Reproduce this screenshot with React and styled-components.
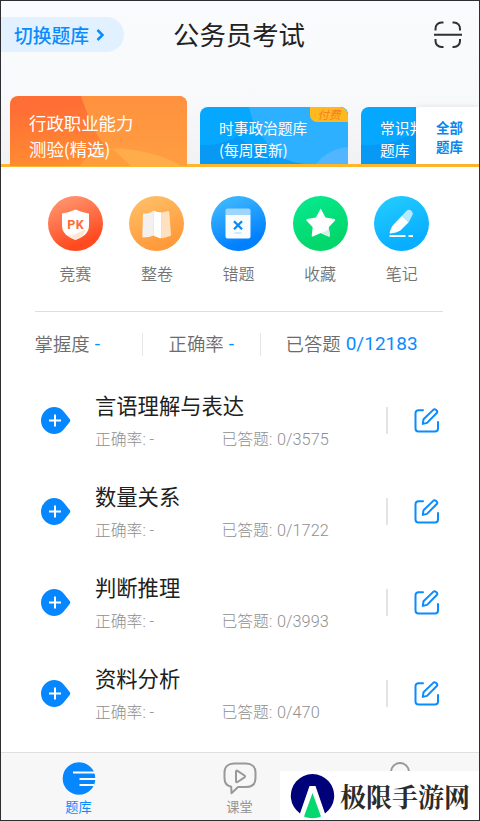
import styled, { createGlobalStyle } from 'styled-components';

const GlobalStyle = createGlobalStyle`
  * {
    box-sizing: border-box;
  }
  body {
    margin: 0;
    font-family: Roboto, 'Noto Sans CJK SC', sans-serif;
  }
  svg {
    display: block;
  }
`;

const Screen = styled.div`
  position: relative;
  display: flex;
  flex-direction: column;
  width: 480px;
  height: 821px;
  overflow: hidden;
  background: #fff;
  border: 1px solid #2d2d32;
`;

const Top = styled.header`
  height: 166px;
  background: linear-gradient(#fafbfd 0, #f8f9fb 95px, #f1f1f3 166px);
`;

const TitleBar = styled.div`
  display: grid;
  grid-template-columns: 123px 1fr 123px;
  align-items: center;
  height: 67px;
`;

const SwitchButton = styled.button`
  display: flex;
  align-items: center;
  gap: 7px;
  height: 35px;
  padding: 0 0 0 13px;
  border: 0;
  border-radius: 0 18px 18px 0;
  background: #e1f1ff;
  color: #0a8cff;
  font: 500 18.8px/33px 'Noto Sans CJK SC', sans-serif;
`;

const Title = styled.h1`
  margin: 0 0 2px;
  padding-right: 2px;
  text-align: center;
  color: #222;
  font: 400 26.4px/34px 'Noto Sans CJK SC', sans-serif;
`;

const ScanIcon = styled.svg`
  justify-self: end;
  margin-right: 17px;
`;

const Tabs = styled.div`
  display: flex;
  align-items: flex-end;
  height: 99px;
  padding-left: 9px;
  border-bottom: 3px solid #ffb62b;
`;

const Tab = styled.div`
  position: relative;
  flex: none;
  width: ${(p) => p.$width}px;
  height: ${(p) => (p.$active ? 70 : 57)}px;
  margin-right: ${(p) => (p.$last ? 0 : 13)}px;
  margin-bottom: ${(p) => (p.$active ? -2 : 0)}px;
  padding: ${(p) => (p.$active ? '14px 0 0 19px' : '10px 0 0 19px')};
  border-radius: ${(p) => (p.$last ? '8px 0 0 0' : '8px 8px 0 0')};
  overflow: hidden;
  white-space: nowrap;
  color: #fff;
  font-family: 'Noto Sans CJK SC', sans-serif;
  font-size: ${(p) => (p.$active ? 17.4 : 14.7)}px;
  line-height: ${(p) => (p.$active ? 25.5 : 22)}px;
`;

const TabArt = styled.svg`
  position: absolute;
  top: 0;
  left: 0;
`;

const TabText = styled.div`
  position: relative;
`;

const PaidBadge = styled.span`
  position: absolute;
  top: 0;
  right: 0;
  width: 38px;
  height: 15px;
  border-radius: 0 8px 0 7px;
  background: #ffb91f;
  color: #f97a2c;
  text-align: center;
  font-size: 11.5px;
  font-style: italic;
  line-height: 14px;
`;

const AllTab = styled.div`
  flex: 1;
  height: 57px;
  padding: 11px 0 0 20px;
  border-radius: 4px 0 0 0;
  background: #fff;
  box-shadow: 0 -1px 5px rgba(0, 0, 0, 0.07);
  color: #0a86ef;
  z-index: 1;
  font: 700 13.4px/18.5px 'Noto Sans CJK SC', sans-serif;
`;

const Shortcuts = styled.nav`
  display: grid;
  grid-template-columns: repeat(5, 81.6px);
  height: 144px;
  padding: 29px 0 0 33.5px;
`;

const Shortcut = styled.div`
  display: flex;
  flex-direction: column;
  align-items: center;
  gap: 10px;
  color: #747474;
  font: 350 16px/24px 'Noto Sans CJK SC', sans-serif;
`;

const Stats = styled.div`
  display: flex;
  align-items: center;
  height: 65px;
  margin: 0 36px 0 34px;
  border-top: 1px solid #dedede;
`;

const Stat = styled.div`
  display: flex;
  align-items: center;
  width: ${(p) => p.$width}px;
  height: 23px;
  margin-right: ${(p) => p.$gap}px;
  border-right: ${(p) => (p.$divided ? '1px solid #e7e7e7' : 0)};
  white-space: nowrap;
  color: #6c6c6c;
  font: 350 18.4px/24px 'Noto Sans CJK SC', sans-serif;
`;

const StatLabel = styled.span`
  margin: -2px 0 0 -0.5px;
`;

const StatValue = styled.b`
  margin-left: 5px;
  color: #0a8cff;
  font: 400 19px/26px Roboto, sans-serif;
`;

const Subjects = styled.main`
  flex: 1;
  margin-top: -1px;
`;

const Subject = styled.section`
  display: flex;
  align-items: center;
  height: 91px;
  padding-left: 40px;
`;

const SubjectBody = styled.div`
  width: 291px;
  margin-left: 24px;
`;

const SubjectName = styled.h2`
  margin: 0;
  color: #202020;
  font: 400 21.3px/34px 'Noto Sans CJK SC', sans-serif;
`;

const SubjectMeta = styled.div`
  display: grid;
  grid-template-columns: 126.5px 1fr;
  padding-top: 2px;
  margin-bottom: -2px;
  color: #8f8f8f;
  font: 300 15.8px/32px Roboto, 'Noto Sans CJK SC', sans-serif;
`;

const MetaValue = styled.span`
  margin-left: 1px;
  font-size: 16.3px;
`;

const Separator = styled.i`
  width: 2px;
  height: 27px;
  margin-right: 26px;
  background: #e4e4e4;
`;

const BottomBar = styled.footer`
  display: grid;
  grid-template-columns: 155px 167px 1fr;
  height: 68px;
  border-top: 1px solid #dfdfdf;
  background: #f7f7f7;
`;

const BottomItem = styled.div`
  display: flex;
  flex-direction: column;
  align-items: center;
  gap: 2px;
  padding-top: 8px;
  color: ${(p) => (p.$active ? '#0a8cff' : '#959595')};
  font: 400 13.2px/20px 'Noto Sans CJK SC', sans-serif;
`;

const ProfileIcon = styled.svg`
  margin-left: -3px;
`;

const SiteMark = styled.div`
  position: absolute;
  right: -1px;
  bottom: -1px;
  display: flex;
  align-items: center;
  gap: 5px;
  width: 200px;
  height: 50px;
  padding-left: 10px;
  background: #fff;
  color: #2b2b2b;
  white-space: nowrap;
  font: 700 26px/46px 'Noto Serif CJK SC', 'Noto Sans CJK SC', serif;
`;

const shortcuts = [
  { label: '竞赛', id: 'pk', from: '#ff8d66', to: '#ff4a1f' },
  { label: '整卷', id: 'paper', from: '#ffba61', to: '#ff9b3b' },
  { label: '错题', id: 'wrong', from: '#38b3ff', to: '#007fff' },
  { label: '收藏', id: 'star', from: '#05e789', to: '#03d66a' },
  { label: '笔记', id: 'note', from: '#1fc7ff', to: '#08aeff' },
];

const subjects = [
  { name: '言语理解与表达', total: 3575 },
  { name: '数量关系', total: 1722 },
  { name: '判断推理', total: 3993 },
  { name: '资料分析', total: 470 },
];

const glyphs = {
  pk: (
    <>
      <path d="M14 17.5c5-.7 9-2 13.5-4 4.5 2 8.500 3.300 13.500 4v12c0 7.500-5.500 11.500-13.500 14.500C19.500 41 14 37 14 29.500z" fill="#fff" />
      <path d="M38 34c-2 4.500-5.500 7.500-10.500 9.800-3-1-5-2.300-7-3.800C27 40 32 34 38 34z" fill="#ffe5d4" />
      <text x="27.700" y="33" textAnchor="middle" fontFamily="Roboto" fontSize="12.500" fontWeight="700" letterSpacing="0.500" fill="#ff6a35">
        PK
      </text>
    </>
  ),
  paper: (
    <>
      <path d="M15 17.500c3.500.4 6.500-.5 9.500-3v25c-3 1.200-6 2-9.500 2-1.200 0-1.700-.6-1.700-1.600L14 19c0-1 0-1.500 1-1.500z" fill="#f3f0ef" />
      <path d="M24.500 14.500c2.600 1.200 5.200 2 8 2v25.700c-2.800-.2-5.400-1.300-8-2.700z" fill="#fff" />
      <path d="M32.500 16.500c2 0 4-.9 5.800-1.500 1.200-.3 1.900.3 2 1.500l1.700 22c0 1-.4 1.400-1.500 1.700-2.700.6-5.200 1.800-8 2z" fill="#ffe0bf" />
    </>
  ),
  wrong: (
    <>
      <path d="M14.500 19.500v-5a2 2 0 0 1 2-2h21a2 2 0 0 1 2 2v5z" fill="#9ed5ff" />
      <path d="M14.500 19h25v21.500a2 2 0 0 1-2 2h-21a2 2 0 0 1-2-2z" fill="#f8fcff" />
      <path d="m23 25.300 8 8m0-8-8 8" stroke="#0a88f5" strokeWidth="2.300" />
      <path d="M23.500 37h7" stroke="#b5ddff" strokeWidth="1.200" />
    </>
  ),
  star: (
    <>
      <path d="m28.100 13.200 4.400 8.200 8.900 1.700c1 .3 1 1 .4 1.600l-6 6.500 1 8.300c0 1-.6 1.300-1.400 1l-7.700-3.500-7.700 3.500c-.8.300-1.400 0-1.300-1l1-8.300-6-6.500c-.6-.6-.5-1.400.4-1.600l8.800-1.700 4.400-8.200c.3-.6.500-.6.800 0z" fill="#fff" />
      <path d="M27.700 37c4-1 6.300-2 8.200-5l1 7.500c0 1-.6 1.300-1.400 1z" fill="#d5eee7" />
    </>
  ),
  note: (
    <>
      <path d="m28 19.800 6.700 6.400-8.300 8.300c-2.500 1.700-6 2.500-9.900 3-.7 0-1-.4-.8-1 .8-3 1.800-5.500 3.500-7.500z" fill="#fff" />
      <path d="m28 19.800 4.300-4.700c1.700-1.700 3.600-1.600 5.200 0 1.700 1.700 1.700 3.500.2 5.500l-3 5.600z" fill="#b9e9ff" />
      <path d="M15.500 40h16M34.500 40H39" stroke="#fff" strokeWidth="2.200" />
    </>
  ),
};

const ShortcutIcon = ({ id, from, to }) => (
  <svg width="55" height="55" viewBox="0 0 55 55">
    <defs>
      <linearGradient id={id} x1="0.300" y1="0" x2="0.700" y2="1">
        <stop offset="0.100" stopColor={from} />
        <stop offset="0.850" stopColor={to} />
      </linearGradient>
    </defs>
    <circle cx="27.500" cy="27.500" r="27.500" fill={`url(#${id})`} />
    {glyphs[id]}
  </svg>
);

const BlueTabArt = () => (
  <TabArt width="148" height="57" viewBox="0 0 148 57">
    <path d="M0 0h148v57H0z" fill="#06a7ff" />
    <path d="M0 38c12 1 26-2 38-9 12 12 25 18 40 22l12 6H0z" fill="#0899f5" />
    <path d="M49 0h99v57H98C82 52 72 44 65 33 57 23 51 12 49 0z" fill="#2db0ff" />
    <path d="M70 45c10 6 20 10 35 12h20H70z" fill="#0c9df8" />
    <path d="M148 40c-13 1-24 7-32 17h32z" fill="#52b5ff" />
  </TabArt>
);

const PlusPin = () => (
  <svg width="30" height="27" viewBox="0 0 30 27">
    <path d="M13.500 0C18 0 21 2.200 23.500 5.400l5.200 6.700c.8 1 .8 1.700 0 2.800l-5.200 6.700C21 24.800 18 27 13.500 27a13.500 13.500 0 0 1 0-27z" fill="#0787ff" />
    <path d="M8 13.500h12M14 7.500v12" stroke="#fff" strokeWidth="2" />
  </svg>
);

const EditIcon = () => (
  <svg width="27" height="27" viewBox="0 0 27 27" fill="none" stroke="#0a8cff" strokeWidth="2" strokeLinecap="round" strokeLinejoin="round">
    <path d="M9 3.200H4.500a3 3 0 0 0-3 3V21.500a3 3 0 0 0 3 3H21a3 3 0 0 0 3-3V15" />
    <path d="m9.500 12.300 10-9.700c1.300-1.200 4.700 1.200 3.500 3.100L13 15.900l-4.200 1z" />
  </svg>
);

const App = () => (
  <>
    <GlobalStyle />
    <Screen>
      <Top>
        <TitleBar>
          <SwitchButton>
            切换题库
            <svg width="9" height="12" viewBox="0 0 9 12">
              <path d="m1.500 1 5 5-5 5" fill="none" stroke="#0a8cff" strokeWidth="2.500" />
            </svg>
          </SwitchButton>
          <Title>公务员考试</Title>
          <ScanIcon width="28" height="28" viewBox="0 0 28 28" fill="none" stroke="#303030" strokeWidth="2">
            <path d="M1.500 9.500V8A6 6 0 0 1 7.500 1.500H9.500M18.500 1.500H20A6 6 0 0 1 26 8v1.500M1.500 18v2a6 6 0 0 0 6 6h2M18.500 26H20a6 6 0 0 0 6-6v-2M0 13.700h28" />
          </ScanIcon>
        </TitleBar>
        <Tabs>
          <Tab $active $width={177}>
            <TabArt width="177" height="70" viewBox="0 0 177 70">
              <defs>
                <linearGradient id="tabOrange" x1="0" y1="0" x2="0.300" y2="1">
                  <stop offset="0.200" stopColor="#ff6e35" />
                  <stop offset="1" stopColor="#ff8e31" />
                </linearGradient>
                <linearGradient id="tabLight" x1="0" y1="0" x2="0" y2="1">
                  <stop offset="0" stopColor="#ff913f" />
                  <stop offset="1" stopColor="#ff9e41" />
                </linearGradient>
              </defs>
              <path d="M0 0h177v70H0z" fill="url(#tabOrange)" />
              <path d="M71 0h106v70H118L90 44C82 30 76 15 71 0z" fill="url(#tabLight)" />
              <path d="M70 70c9-14 25-19 45-17 23 2 42 8 56 17z" fill="#ffac4b" />
              <path d="M70 70c5-9 18-15 33-17l18 17z" fill="#ff9d3d" />
            </TabArt>
            <TabText>
              行政职业能力
              <br />
              测验(精选)
            </TabText>
          </Tab>
          <Tab $width={148}>
            <BlueTabArt />
            <TabText>
              时事政治题库
              <br />
              (每周更新)
            </TabText>
            <PaidBadge>付费</PaidBadge>
          </Tab>
          <Tab $last $width={55}>
            <TabArt width="55" height="57" viewBox="0 0 55 57">
              <path d="M0 0h55v57H0z" fill="#06a7ff" />
              <path d="M0 38c15 1 35-2 55-13v32H0z" fill="#0899f5" />
            </TabArt>
            <TabText>
              常识判断
              <br />
              题库
            </TabText>
          </Tab>
          <AllTab>
            全部
            <br />
            题库
          </AllTab>
        </Tabs>
      </Top>
      <Shortcuts>
        {shortcuts.map((item) => (
          <Shortcut key={item.id}>
            <ShortcutIcon {...item} />
            {item.label}
          </Shortcut>
        ))}
      </Shortcuts>
      <Stats>
        <Stat $divided $width={108} $gap={26}>
          <StatLabel>掌握度</StatLabel>
          <StatValue>-</StatValue>
        </Stat>
        <Stat $divided $width={92} $gap={25}>
          <StatLabel>正确率</StatLabel>
          <StatValue>-</StatValue>
        </Stat>
        <Stat $width={131} $gap={0}>
          <StatLabel>已答题</StatLabel>
          <StatValue>0/12183</StatValue>
        </Stat>
      </Stats>
      <Subjects>
        {subjects.map((subject) => (
          <Subject key={subject.name}>
            <PlusPin />
            <SubjectBody>
              <SubjectName>{subject.name}</SubjectName>
              <SubjectMeta>
                <span>正确率: -</span>
                <span>
                  已答题: <MetaValue>0/{subject.total}</MetaValue>
                </span>
              </SubjectMeta>
            </SubjectBody>
            <Separator />
            <EditIcon />
          </Subject>
        ))}
      </Subjects>
      <BottomBar>
        <BottomItem $active>
          <svg width="34" height="34" viewBox="0 0 34 34">
            <circle cx="17" cy="17.500" r="16.300" fill="#0787ff" />
            <path d="M11 11.500h22M17.500 18H34M17.500 24H32" stroke="#fff" strokeWidth="2" />
          </svg>
          题库
        </BottomItem>
        <BottomItem>
          <svg width="34" height="34" viewBox="0 0 34 34" fill="none" stroke="#999" strokeWidth="2" strokeLinejoin="round">
            <path d="M11 2.500h12c6 0 9.500 3.500 9.500 9v5.500c0 6-3.500 9-9.500 9h-8l-6.500 6.200-.3-6.500C4 25 1.500 21.500 1.500 17v-5.500c0-5.500 3.500-9 9.500-9z" />
            <path d="M13 10.500v9.700c0 1 .7 1.300 1.500.8l7-4.700c.8-.6.800-1.300 0-1.800l-7-4.700c-.8-.5-1.500-.2-1.500.7z" />
          </svg>
          课堂
        </BottomItem>
        <BottomItem>
          <ProfileIcon width="34" height="34" viewBox="0 0 34 34" fill="none" stroke="#999" strokeWidth="2">
            <circle cx="17" cy="11" r="9" />
            <path d="M4 33c1-8 6-11 13-11s12 3 13 11" />
          </ProfileIcon>
        </BottomItem>
      </BottomBar>
      <SiteMark>
        <svg width="45" height="46" viewBox="0 0 45 46">
          <path d="M10 40.500a21.700 21.700 0 1 1 25 0L25.500 13h-6z" fill="#000078" />
          <path d="m22.500 20 8.500 23.500c-5 2.300-12 2.300-17 0z" fill="#05d86f" />
        </svg>
        极限手游网
      </SiteMark>
    </Screen>
  </>
);

export default App;
